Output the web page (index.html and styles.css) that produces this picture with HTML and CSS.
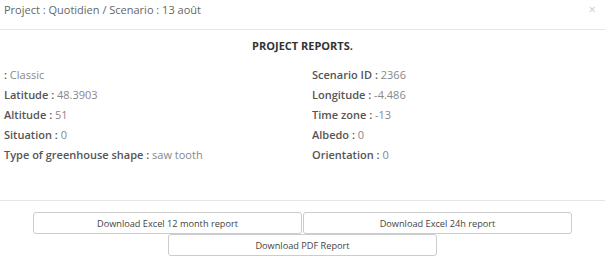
FILE: index.html
```html
<!DOCTYPE html>
<html lang="en">
  <head>
    <meta charset="UTF-8" />
    <meta name="viewport" content="width=device-width, initial-scale=1.0" />
    <title>Project reports</title>
    <link rel="stylesheet" href="styles.css">
  </head>
  <body>
    <div class="modal">
      <div class="modal-header">
        <span class="modal-title">Project : Quotidien / Scenario : 13 août</span>
        <span class="close">&times;</span>
      </div>
      <div class="modal-body">
        <h4 class="report-title">PROJECT REPORTS.</h4>
        <div class="report-grid">
          <div class="col">
            <p><b>:</b> Classic</p>
            <p><b>Latitude :</b> 48.3903</p>
            <p><b>Altitude :</b> 51</p>
            <p><b>Situation :</b> 0</p>
            <p><b>Type of greenhouse shape :</b> saw tooth</p>
          </div>
          <div class="col">
            <p><b>Scenario ID :</b> 2366</p>
            <p><b>Longitude :</b> -4.486</p>
            <p><b>Time zone :</b> -13</p>
            <p><b>Albedo :</b> 0</p>
            <p><b>Orientation :</b> 0</p>
          </div>
        </div>
      </div>
      <div class="modal-footer">
        <div class="btn-row">
          <button class="btn">Download Excel 12 month report</button>
          <button class="btn">Download Excel 24h report</button>
        </div>
        <div class="btn-row">
          <button class="btn">Download PDF Report</button>
        </div>
      </div>
    </div>
  </body>
</html>
```

FILE: styles.css
```css
* {
  margin: 0;
  padding: 0;
  box-sizing: border-box;
}
body {
  font-family: "Open Sans", sans-serif;
  background: #fff;
  color: #888;
}
.modal {
  width: 605px;
}
.modal-header {
  height: 30px;
  display: flex;
  justify-content: space-between;
  align-items: flex-start;
  padding: 2px 9px 0 4px;
  border-bottom: 1px solid #e5e5e5;
}
.modal-title {
  font-size: 11px;
  line-height: 16px;
  color: #666;
}
.close {
  font-size: 13px;
  line-height: 14px;
  color: #ccc;
}
.modal-body {
  height: 170px;
  padding-top: 6px;
}
.report-title {
  text-align: center;
  font-size: 11px;
  line-height: 20px;
  font-weight: 700;
  color: #333;
  margin-bottom: 9px;
}
.report-grid {
  display: grid;
  grid-template-columns: 308px 1fr;
  padding-left: 4px;
}
.col p {
  font-size: 11px;
  line-height: 20px;
  color: #888;
}
.col b {
  color: #555;
  font-weight: 600;
}
.modal-footer {
  border-top: 1px solid #e5e5e5;
  padding-top: 11px;
}
.btn-row {
  display: flex;
  justify-content: center;
  gap: 1px;
}
.btn {
  width: 269px;
  height: 22px;
  background: #fff;
  border: 1px solid #ccc;
  border-radius: 3px;
  font-family: "Open Sans", sans-serif;
  font-size: 9.2px;
  color: #444;
}
```
